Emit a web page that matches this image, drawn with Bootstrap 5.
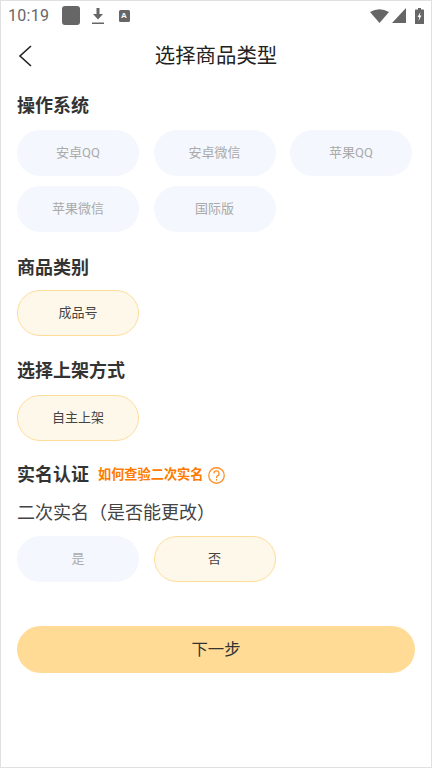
<!DOCTYPE html>
<html lang="zh"><head><meta charset="utf-8">
<link rel="stylesheet" href="https://cdn.jsdelivr.net/npm/bootstrap@5.3.0/dist/css/bootstrap.min.css">
<style>
html,body{height:100%;background:#fff}
body{font-family:"Liberation Sans","Noto Sans CJK SC",sans-serif;color:#333;text-spacing-trim:space-all}
.frame{height:768px;border:1px solid #e0e0e0;overflow:hidden}
.stat{height:29px;padding:0 7px 0 7px;color:#666}
.clock{font-family:Roboto,sans-serif;font-size:16px;letter-spacing:.3px;width:54px;color:#666}
.sq{margin-right:12px}
.dl{margin-right:15px}
.wifi{margin-right:3px}
.sig{margin-right:9px}
.head{height:52px;padding:0 16px;position:relative}
.head h1{font-size:20.4px;font-weight:400;color:#222;margin:0}
.back{position:absolute;left:17px;top:14px}
.sec{padding:0 16px}
.ttl{font-size:18px;line-height:24px;font-weight:700;color:#333;margin:0}
.pills{display:grid;grid-template-columns:repeat(3,122px);column-gap:14.5px;row-gap:10.5px}
.pilla{height:45.5px;border-radius:23px;font-size:13px;background:#f4f7fd;color:#aaa;border:0;padding:0;font-family:Roboto,"Noto Sans CJK SC",sans-serif}
.pillb{background:#fef8ea;color:#444;border:1px solid #fedc9a}
.qlink{font-size:13.2px;font-weight:700;color:#ff7a00;margin-left:9px}
.qicon{margin-left:4px}
.sub{font-size:18px;line-height:24px;color:#444;margin:14px 0 0}
.go{display:block;width:398px;height:47px;border-radius:24px;border:0;background:#ffdb96;color:#333;font-size:16.4px;padding:0}
.s1{padding-top:12px}.s2{padding-top:24.5px}.s3{padding-top:23.5px}.s4{padding-top:22.5px}.s5{padding-top:44.5px}
.m10{margin-top:10px}.m11{margin-top:11px}.m12{margin-top:12px}
</style></head><body>
<div class="frame">
 <div class="stat d-flex align-items-center">
  <span class="clock">10:19</span>
  <svg class="sq" width="18" height="19"><rect width="18" height="19" rx="3" fill="#666"/></svg>
  <svg class="dl" width="12" height="16" viewBox="0 0 12 16"><path d="M4.500 0h3v6H11L6 11.500 1 6h3.500zM0 14.500h12V16H0z" fill="#666"/></svg>
  <svg width="11" height="12" viewBox="0 0 11 12"><rect width="11" height="12" rx="1.500" fill="#666"/><text x="5" y="8" font-size="8" font-weight="700" text-anchor="middle" fill="#fff" font-family="Liberation Sans">A</text></svg>
  <span class="ms-auto d-flex align-items-center">
   <svg class="wifi" width="19" height="14" viewBox="0 0 19 14"><path d="M0 3Q9.500-2.500 19 3L9.500 14z" fill="#666"/></svg>
   <svg class="sig" width="14" height="15" viewBox="0 0 14 15"><path d="M14 0v15H0z" fill="#666"/></svg>
   <svg width="9" height="16" viewBox="0 0 9 16"><path d="M3 0h3v1.500h2.500a.5.5 0 0 1 .5.500v13.500a.5.5 0 0 1-.5.500H.5a.5.5 0 0 1-.5-.500V2a.5.5 0 0 1 .5-.500H3z" fill="#666"/><path d="M5.500 4 2.500 9h1.700L3.500 13l3-5.500H4.700z" fill="#fff"/></svg>
  </span>
 </div>
 <div class="head d-flex align-items-center justify-content-center">
  <svg class="back" width="14" height="24" viewBox="0 0 14 24" fill="none" stroke="#222" stroke-width="1.600"><path d="M13 2 2 12l11 10"/></svg>
  <h1>选择商品类型</h1>
 </div>
 <div class="sec s1"><p class="ttl">操作系统</p>
  <div class="pills m12">
   <button class="pilla">安卓QQ</button><button class="pilla">安卓微信</button><button class="pilla">苹果QQ</button>
   <button class="pilla">苹果微信</button><button class="pilla">国际版</button>
  </div></div>
 <div class="sec s2"><p class="ttl">商品类别</p>
  <div class="pills m10"><button class="pilla pillb">成品号</button></div></div>
 <div class="sec s3"><p class="ttl">选择上架方式</p>
  <div class="pills m12"><button class="pilla pillb">自主上架</button></div></div>
 <div class="sec s4">
  <div class="d-flex align-items-center"><p class="ttl">实名认证</p>
   <span class="qlink">如何查验二次实名</span>
   <svg class="qicon" width="17" height="17" viewBox="0 0 16 16" fill="none" stroke="#ff8f2b" stroke-width="1.200"><circle cx="8" cy="8" r="7.300"/><path d="M5.600 6.200A2.400 2.400 0 1 1 8.800 8.400C8 8.800 8 9.300 8 10.300"/><path d="M8 11.300v1.500"/></svg>
  </div>
  <p class="sub">二次实名（是否能更改）</p>
  <div class="pills m11"><button class="pilla">是</button><button class="pilla pillb">否</button></div>
 </div>
 <div class="sec s5"><button class="go">下一步</button></div>
</div>
<script src="https://cdn.jsdelivr.net/npm/bootstrap@5.3.0/dist/js/bootstrap.bundle.min.js"></script>
</body></html>
